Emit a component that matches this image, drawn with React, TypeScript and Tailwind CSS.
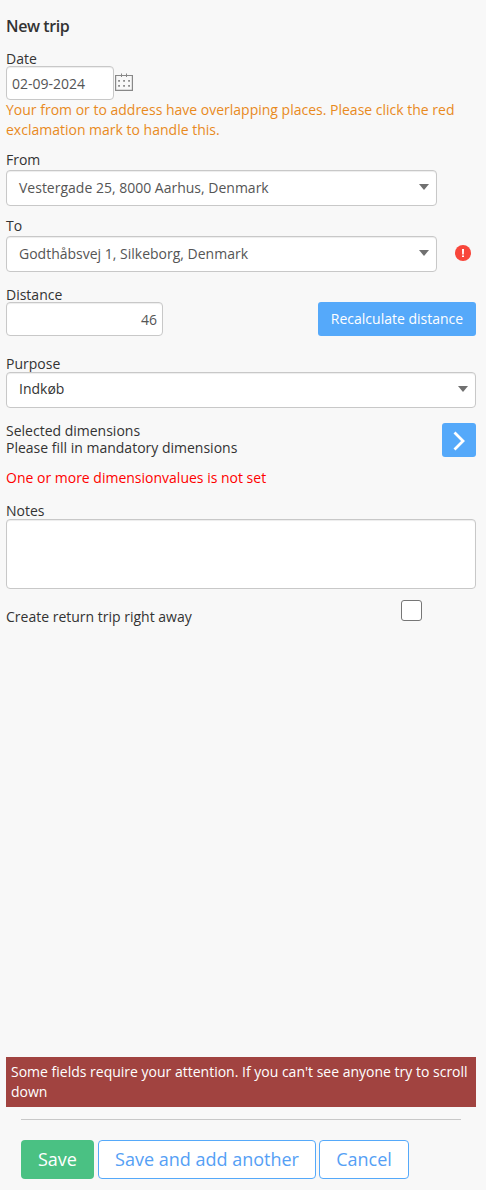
const fieldClass = 'rounded border border-[#c8c8c8] bg-white text-[#555555] shadow-[inset_0_1px_1px_rgba(0,0,0,0.075)]'

function SelectBox({ value, className }: { value: string; className: string }) {
  return (
    <button
      type="button"
      className={`flex h-9 items-center justify-between rounded border border-[#c8c8c8] bg-white pl-3 pr-[7px] text-left shadow-[inset_0_1px_1px_rgba(0,0,0,0.075)] ${className}`}
    >
      <span>{value}</span>
      <svg width="10" height="6" viewBox="0 0 10 6" className="mb-0.5">
        <path d="M0 0h10L5 6z" fill="#707070" />
      </svg>
    </button>
  )
}

function CalendarIcon() {
  return (
    <svg width="18" height="18" viewBox="0 0 18 18" fill="none" className="mb-0.5">
      <path d="M.6 2.5h16.8v14.9H.6z" stroke="#888888" strokeWidth="1.2" />
      <path d="M6.500 .5v3.500M11.500 .5v3.500" stroke="#888888" />
      <path
        d="M3.200 7h1.700v1.700H3.200zM8.200 7h1.700v1.700H8.200zM13.200 7h1.700v1.700h-1.700zM3.200 12h1.700v1.700H3.200zM8.200 12h1.700v1.700H8.200zM13.200 12h1.700v1.700h-1.700z"
        fill="#808080"
      />
    </svg>
  )
}

export default function App() {
  return (
    <div className="flex h-[1190px] w-[486px] flex-col bg-[#f8f8f8] pl-1.5 pr-2.5 font-['Open_Sans',sans-serif] text-sm leading-4 text-[#333333]">
      <h1 className="mt-4 text-base font-semibold leading-5 tracking-[-0.4px]">New trip</h1>

      <label htmlFor="date" className="mt-[15px] h-[15px]">Date</label>
      <div className="flex items-center gap-px">
        <input id="date" defaultValue="02-09-2024" className={`h-[34px] w-[108px] px-[5px] ${fieldClass}`} />
        <CalendarIcon />
      </div>
      <p className="leading-5 text-[#e88a1e]">
        Your from or to address have overlapping places. Please click the red exclamation mark to handle this.
      </p>

      <div className="mt-3 h-[18px]">From</div>
      <SelectBox value="Vestergade 25, 8000 Aarhus, Denmark" className="w-[431px] text-[#555555]" />

      <div className="mt-3 h-[18px]">To</div>
      <div className="flex items-center">
        <SelectBox value="Godthåbsvej 1, Silkeborg, Denmark" className="w-[431px] text-[#555555]" />
        <svg width="16" height="16" viewBox="0 0 16 16" className="mb-0.5 ml-[18px]">
          <circle cx="8" cy="8" r="8" fill="#f8463b" />
          <path d="M7 4h2l-.2 5.500H7.200zM7 10.500h2v1.500H7z" fill="#ffffff" />
        </svg>
      </div>

      <label htmlFor="distance" className="mt-[15px] h-[15px]">Distance</label>
      <div className="flex items-center justify-between">
        <input id="distance" defaultValue="46" className={`h-[34px] w-[157px] px-[5px] text-right ${fieldClass}`} />
        <button type="button" className="h-[34px] w-[158px] rounded-[3px] bg-[#55a9fa] text-white">
          Recalculate distance
        </button>
      </div>

      <div className="mt-5 h-4">Purpose</div>
      <SelectBox value="Indkøb" className="w-full pb-0.5 text-[#333333] [&>svg]:mb-0" />

      <div className="mt-[15px] flex h-[34px] items-start justify-between leading-[17px]">
        <div className="-mt-px">
          <p>Selected dimensions</p>
          <p>Please fill in mandatory dimensions</p>
        </div>
        <button type="button" aria-label="Dimensions" className="flex size-[34px] items-center justify-center rounded-[3px] bg-[#55a9fa]">
          <svg width="12" height="20" viewBox="0 0 12 20" fill="none" stroke="#ffffff" strokeWidth="2.8" className="mt-0.5">
            <path d="M1.5 1.5L10 10l-8.500 8.500" />
          </svg>
        </button>
      </div>
      <p className="mt-[13px] text-[#ff0000]">One or more dimensionvalues is not set</p>

      <label htmlFor="notes" className="mt-[17px] h-4">Notes</label>
      <textarea id="notes" className={`h-[70px] w-full shrink-0 resize-none ${fieldClass}`} />

      <div className="mt-[11px] flex items-start justify-between pr-[54px]">
        <label htmlFor="return-trip" className="mt-[9px]">Create return trip right away</label>
        <input
          id="return-trip"
          type="checkbox"
          className="size-[21px] appearance-none rounded-[3px] border border-[#767676] bg-white"
        />
      </div>

      <div className="mt-auto bg-[#a14340] p-[5px] leading-5 text-white">
        Some fields require your attention. If you can't see anyone try to scroll down
      </div>
      <hr className="mx-[15px] mt-3 border-[#c8c8c8]" />
      <div className="mb-[11px] ml-[15px] mt-5 flex h-[39px] text-lg">
        <button type="button" className="w-[73px] rounded bg-[#4ac183] pb-0.5 text-white">Save</button>
        <button type="button" className="ml-1 w-[218px] rounded border border-[#55a9fa] bg-white pb-0.5 text-[#55a0f5]">
          Save and add another
        </button>
        <button type="button" className="ml-[3px] w-[90px] rounded border border-[#55a9fa] bg-white pb-0.5 text-[#55a0f5]">
          Cancel
        </button>
      </div>
    </div>
  )
}
